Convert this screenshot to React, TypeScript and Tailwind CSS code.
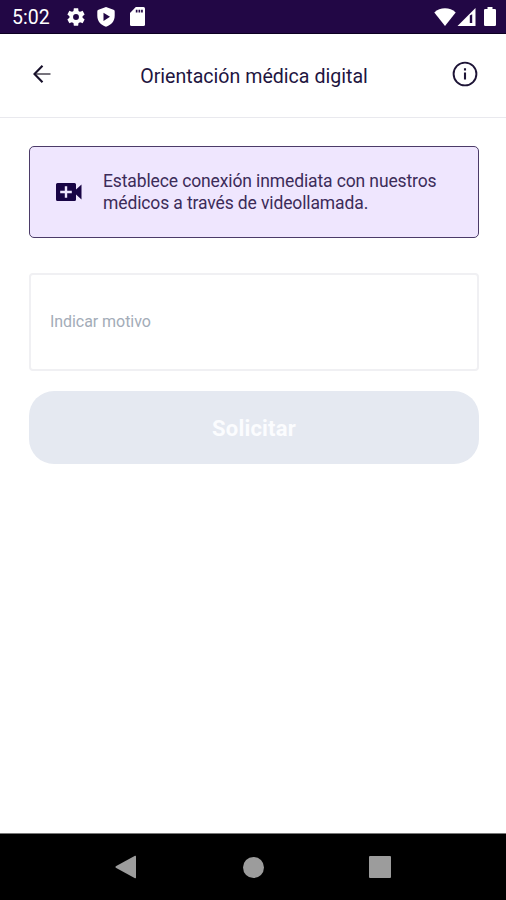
function StatusBar() {
  return (
    <div className="flex h-[34px] items-center justify-between border-b border-[#0c0022] bg-[#220745] pr-[10px] pl-3 text-white">
      <div className="flex items-center">
        <span className="w-[54px] pt-[3px] text-[19.5px] leading-none">5:02</span>
        <svg className="-ml-px h-[22px] w-[22px]" viewBox="0 0 24 24" fill="currentColor">
          <path d="M19.14 12.94c.04-.3.06-.61.06-.94s-.02-.64-.07-.94l2.03-1.58c.18-.14.23-.41.12-.61l-1.92-3.32c-.12-.22-.37-.29-.59-.22l-2.39.96c-.5-.38-1.03-.7-1.62-.94l-.36-2.54c-.04-.24-.24-.41-.48-.41h-3.84c-.24 0-.43.17-.47.41l-.36 2.54c-.59.24-1.13.57-1.62.94l-2.39-.96c-.22-.08-.47 0-.59.22L2.74 8.87c-.12.21-.08.47.12.61l2.03 1.58c-.05.3-.09.63-.09.94s.02.64.07.94l-2.03 1.58c-.18.14-.23.41-.12.61l1.92 3.32c.12.22.37.29.59.22l2.39-.96c.5.38 1.03.7 1.62.94l.36 2.54c.05.24.24.41.48.41h3.84c.24 0 .44-.17.47-.41l.36-2.54c.59-.24 1.13-.56 1.62-.94l2.39.96c.22.08.47 0 .59-.22l1.92-3.32c.12-.22.07-.47-.12-.61l-2.01-1.58zM12 15.200A3.200 3.200 0 1 1 12 8.800a3.200 3.200 0 0 1 0 6.400z" />
        </svg>
        <svg className="ml-[10px] h-5 w-[18px]" viewBox="0 0 18 20" fill="currentColor">
          <path fillRule="evenodd" d="M9 0 16.500 2.700Q17.700 3.100 17.700 4.400V8.800C17.700 14.200 14.200 18.200 9 19.800 3.800 18.200.3 14.200.3 8.800V4.400Q.3 3.100 1.500 2.700ZM6.500 5.700V13.900L13 9.800Z" />
        </svg>
        <svg className="ml-[15px] h-[19px] w-[15px]" viewBox="0 0 15 19">
          <path fill="currentColor" d="M5.800 0H13.500Q15 0 15 1.500V17.500Q15 19 13.500 19H1.500Q0 19 0 17.500V6Z" />
          <path fill="#220745" d="M5.800 2.800h1.700V5.600H5.800zM8.500 2.800h1.700V5.600H8.500zM11.100 2.800h1.700V5.600H11.100z" />
        </svg>
      </div>
      <div className="flex items-center">
        <svg className="h-[18px] w-[22px]" viewBox="0 0 22 18" fill="currentColor">
          <path d="M11 18 .3 4.400C3.200 1.600 7 .3 11 .3s7.800 1.300 10.700 4.100Z" />
        </svg>
        <svg className="ml-px h-[18px] w-[19px]" viewBox="0 0 19 18">
          <path fill="currentColor" d="M18.500 0V18H.5Z" />
          <path fill="#220745" d="M12.800 7.500 15.200 6.200V15H12.800Z" />
        </svg>
        <svg className="ml-2 h-[19px] w-[12px]" viewBox="0 0 12 19" fill="currentColor">
          <path d="M3.500 0H8.500V2H10.800Q12 2 12 3.200V17.800Q12 19 10.800 19H1.200Q0 19 0 17.800V3.200Q0 2 1.200 2H3.500Z" />
        </svg>
      </div>
    </div>
  );
}

function Header() {
  return (
    <header className="flex h-[84px] items-center justify-between border-b border-[#e9e9ee] pr-7 pb-[2px] pl-8 text-[#22153f]">
      <button aria-label="Volver" className="flex w-[24px] pb-px">
        <svg className="h-5 w-5" viewBox="0 0 20 20" fill="none">
          <path d="M3 10H18.500" stroke="#77747d" strokeWidth="2" />
          <path d="M10.500 1.800 2.500 10 10.500 18.200" stroke="#17102a" strokeWidth="2.100" />
        </svg>
      </button>
      <h1 className="pt-[4px] text-[19.600px] whitespace-nowrap">Orientación médica digital</h1>
      <button aria-label="Información" className="flex pb-px">
        <svg className="h-[26px] w-[26px]" viewBox="0 0 26 26" fill="none" stroke="#1d1436">
          <circle cx="13" cy="13" r="11.400" strokeWidth="1.900" />
          <path d="M13 11.500V18.500M13 7.200V9.400" strokeWidth="2.100" />
        </svg>
      </button>
    </header>
  );
}

function Notice() {
  return (
    <section className="flex h-[92px] items-center rounded-[5px] border border-[#4b3b68] bg-[#efe6fe] pl-[26px] text-[#3c2c59]">
      <svg className="h-[18px] w-[26px] shrink-0" viewBox="0 0 26 18">
        <path fill="#180445" d="M1.500 0H18.500Q20 0 20 1.500V6.500L25.500 1.500V16.500L20 11.500V16.500Q20 18 18.500 18H1.500Q0 18 0 16.500V1.500Q0 0 1.500 0Z" />
        <path stroke="#efe6fe" strokeWidth="2.400" d="M10 3.200V14.800M4.200 9H15.800" />
      </svg>
      <p className="ml-[21px] pt-px text-[17.500px] leading-[21.500px] tracking-[-0.120px] whitespace-nowrap">
        Establece conexión inmediata con nuestros
        <br />
        médicos a través de videollamada.
      </p>
    </section>
  );
}

function NavigationBar() {
  return (
    <nav className="flex h-[67px] items-center justify-between border-t border-[#777] bg-black pr-[115px] pl-[115px] text-[#9c9c9c]">
      <svg className="h-6 w-[21px]" viewBox="0 0 21 24" fill="currentColor">
        <path d="M20 .8Q21 .4 21 1.500V22.500Q21 23.600 20 23.200L.8 12.700Q0 12 .8 11.300Z" />
      </svg>
      <span className="ml-[2px] h-[21px] w-[21px] rounded-full bg-[#9c9c9c]" />
      <span className="h-[22px] w-[22px] rounded-[1px] bg-[#9c9c9c]" />
    </nav>
  );
}

export default function App() {
  return (
    <div className="flex h-[900px] w-[506px] flex-col bg-white font-[Roboto,sans-serif]">
      <StatusBar />
      <Header />
      <main className="flex flex-1 flex-col pt-7 pr-[27px] pl-[29px]">
        <Notice />
        <label className="mt-[35px] flex h-[98px] items-center rounded-[4px] border-2 border-[#f0f0f3] pl-[19px]">
          <input placeholder="Indicar motivo" className="w-full text-[16px] tracking-[-0.060px] outline-none placeholder:text-[#a3acb8]" />
        </label>
        <button className="mt-5 h-[73px] rounded-[25px] bg-[#e5e9f1] pt-px text-[22px] font-bold tracking-[0.200px] text-[#fbfcfe]">
          Solicitar
        </button>
      </main>
      <NavigationBar />
    </div>
  );
}
